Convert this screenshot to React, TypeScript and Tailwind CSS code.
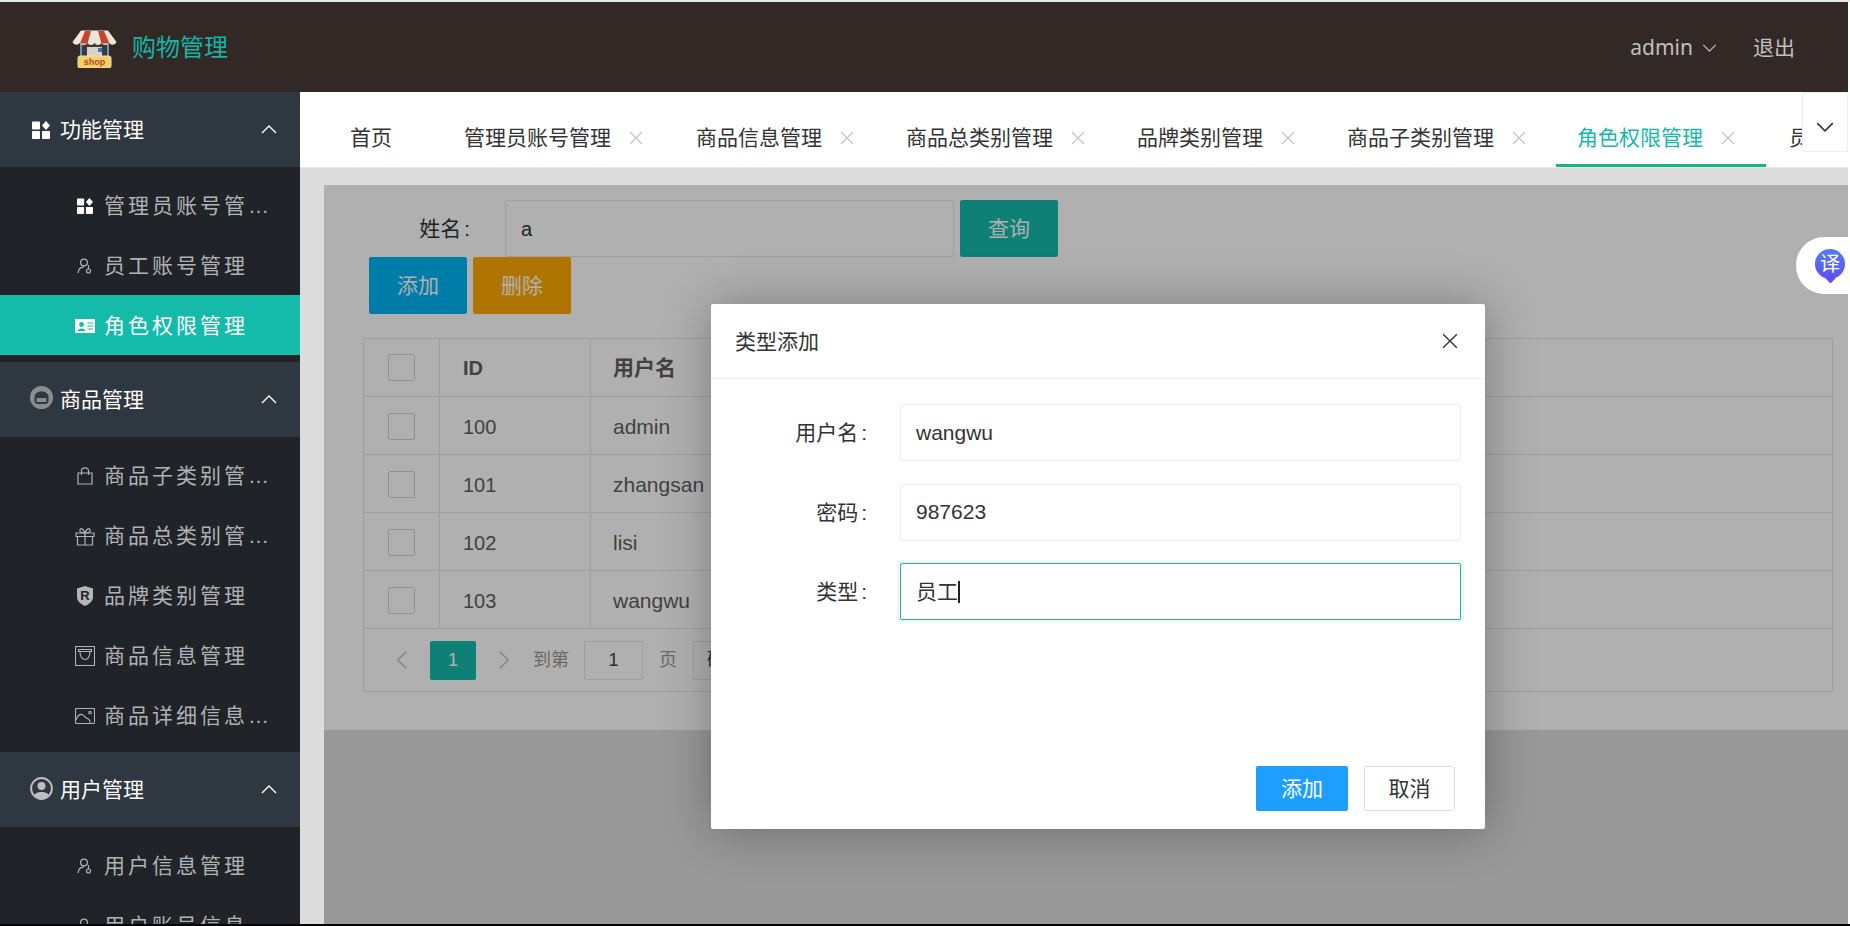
import React from 'react';

const Chevron = ({ up = false, className = '' }: { up?: boolean; className?: string }) => (
    <svg viewBox="0 0 16 9" fill="none" stroke="currentColor" strokeWidth="1.4" className={className}>
        <path d={up ? 'M1 8 L8 1 L15 8' : 'M1 1 L8 8 L15 1'} />
    </svg>
);

const Cross = ({ className = '' }: { className?: string }) => (
    <svg viewBox="0 0 14 14" fill="none" stroke="currentColor" strokeWidth="1.2" className={className}>
        <path d="M1 1 L13 13 M13 1 L1 13" />
    </svg>
);

const GridIcon = ({ className = '' }: { className?: string }) => (
    <svg viewBox="0 0 18 18" fill="currentColor" className={className}>
        <rect x="0" y="0.5" width="8" height="8" rx="0.8" />
        <rect x="0" y="10" width="8" height="8" rx="0.8" />
        <rect x="10" y="10" width="8" height="8" rx="0.8" />
        <path d="M14 0 L18 4.5 L14 9 L10 4.5 Z" />
    </svg>
);

const UserKeyIcon = () => (
    <svg viewBox="0 0 16 16" fill="none" stroke="currentColor" strokeWidth="1.2" className="w-[16px] h-[16px]">
        <circle cx="7" cy="4.5" r="3.4" />
        <path d="M1 15 C1.5 11 3.5 9 7 8.8" />
        <path d="M11.5 7 V11" />
        <circle cx="11.5" cy="13" r="2" />
    </svg>
);

const RoleIcon = () => (
    <svg viewBox="0 0 20 14" className="w-[20px] h-[14px]">
        <rect width="20" height="14" fill="#fff" />
        <circle cx="6.5" cy="5.5" r="2.4" fill="#14bbab" />
        <path d="M2.5 12 C3 8.5 10 8.5 10.5 12 Z" fill="#14bbab" />
        <path d="M12.5 4 H18 M12.5 7 H18 M12.5 10 H18" stroke="#14bbab" strokeWidth="1.2" />
    </svg>
);

const BagIcon = () => (
    <svg viewBox="0 0 16 18" fill="none" stroke="currentColor" strokeWidth="1.2" className="w-[16px] h-[18px]">
        <path d="M1 6 H15 V17 H1 Z" />
        <path d="M4.5 8 V3.8 C4.5 -0.2 11.5 -0.2 11.5 3.8 V8" />
    </svg>
);

const GiftIcon = () => (
    <svg viewBox="0 0 20 19" fill="none" stroke="currentColor" strokeWidth="1.2" className="w-[20px] h-[19px]">
        <path d="M1 6 H19 V9.5 H1 Z" />
        <path d="M2.5 9.5 V18 H17.5 V9.5 M10 6 V18" />
        <path d="M10 6 C6 6 4 4.5 5 2.5 C6.5 0.5 9 2.5 10 6 C11 2.5 13.5 0.5 15 2.5 C16 4.5 14 6 10 6" />
    </svg>
);

const ShieldIcon = () => (
    <svg viewBox="0 0 16 20" className="w-[16px] h-[20px]">
        <path d="M8 0 L16 2.5 V11 C16 15.5 12 18 8 20 C4 18 0 15.5 0 11 V2.5 Z" fill="#b4b5b6" />
        <text x="8" y="14" fontSize="13" fontWeight="700" textAnchor="middle" fill="#202428" fontFamily="Liberation Sans">R</text>
    </svg>
);

const BoxIcon = () => (
    <svg viewBox="0 0 20 20" fill="none" stroke="currentColor" strokeWidth="1.1" className="w-[20px] h-[20px]">
        <rect x="0.5" y="0.5" width="19" height="19" />
        <path d="M3.5 3.5 H16.5 V5.5 H3.5 Z" />
        <path d="M5 6 C5 16 15 16 15 6" />
    </svg>
);

const PictureIcon = () => (
    <svg viewBox="0 0 20 16" fill="none" stroke="currentColor" strokeWidth="1.1" className="w-[20px] h-[16px]">
        <rect x="0.5" y="0.5" width="19" height="15" rx="1" />
        <path d="M1 12 C4 4 8 6 10 9 C12 11 16 11 15 15" />
        <circle cx="15" cy="4.5" r="1.3" />
    </svg>
);

const GoodsCircle = () => (
    <svg viewBox="0 0 23 23" className="w-[23px] h-[23px] -mt-[4px]">
        <circle cx="11.5" cy="11.5" r="11.5" fill="#8b8c8d" />
        <path d="M4.5 11 C4.5 3.5 18.5 3.5 18.5 11 V15 C18.5 17 17 18 15 18 H8 C6 18 4.5 17 4.5 15 Z" fill="#2f3740" />
        <rect x="6.5" y="12" width="10" height="4" rx="1" fill="#8b8c8d" />
    </svg>
);

const UserCircle = () => (
    <svg viewBox="0 0 23 23" className="w-[23px] h-[23px] -mt-[3px]">
        <circle cx="11.5" cy="11.5" r="10.4" fill="#2f3740" stroke="#bdbebf" strokeWidth="2" />
        <circle cx="11.5" cy="9" r="4" fill="#bdbebf" />
        <path d="M4 19 C5 13.5 18 13.5 19 19 C15 22 8 22 4 19 Z" fill="#bdbebf" />
    </svg>
);

const ShopLogo = () => (
    <svg viewBox="0 0 45 38" className="w-[45px] h-[38px] mt-[3px]">
        <path d="M8 13 H37 V27 H8 Z" fill="#3b3a3c" />
        <path d="M9 14 V28 M36 14 V28" stroke="#6d93b5" strokeWidth="2" />
        <rect x="15" y="17" width="15" height="9" fill="#d9d4c8" />
        <rect x="26" y="18" width="4" height="4" fill="#3f78b0" />
        <path d="M9 0.5 H36 L44.5 12 C43 15.5 39 15.5 37.5 13 C36 15.5 31 15.5 29.5 13 C28 15.5 24 15.5 22.5 13 C21 15.5 17 15.5 15.5 13 C14 15.5 9 15.5 7.5 13 C6 15.5 2 15.5 0.5 12 Z" fill="#eee6d8" />
        <path d="M13 1 H19 L15.5 13.5 H8 Z M26 1 H32 L37.5 13.5 H29.5 Z" fill="#c5432f" />
        <rect x="6" y="26" width="33" height="12" rx="2" fill="#f4cf62" stroke="#e8dfc8" />
        <text x="22.5" y="35" fontSize="9" fontWeight="700" textAnchor="middle" fill="#b9452d" fontFamily="Liberation Sans">shop</text>
    </svg>
);

const menus = [
    {
        title: '功能管理',
        icon: <GridIcon className="w-[18px] h-[18px] text-white" />,
        pad: 'pl-[32px] gap-[10px]',
        items: [
            { label: '管理员账号管理', icon: <GridIcon className="w-[16px] h-[16px] text-white" /> },
            { label: '员工账号管理', icon: <UserKeyIcon /> },
            { label: '角色权限管理', icon: <RoleIcon />, active: true }
        ]
    },
    {
        title: '商品管理',
        icon: <GoodsCircle />,
        pad: 'pl-[30px] gap-[7px]',
        items: [
            { label: '商品子类别管理', icon: <BagIcon /> },
            { label: '商品总类别管理', icon: <GiftIcon /> },
            { label: '品牌类别管理', icon: <ShieldIcon /> },
            { label: '商品信息管理', icon: <BoxIcon /> },
            { label: '商品详细信息管理', icon: <PictureIcon /> }
        ]
    },
    {
        title: '用户管理',
        icon: <UserCircle />,
        pad: 'pl-[30px] gap-[7px]',
        items: [
            { label: '用户信息管理', icon: <UserKeyIcon /> },
            { label: '用户账号信息', icon: <UserKeyIcon /> }
        ]
    }
];

const tabs = [
    { label: '首页', cls: 'w-[114px] pl-[23px]' },
    { label: '管理员账号管理', cls: 'w-[232px] pl-[23px]', close: true },
    { label: '商品信息管理', cls: 'w-[210px] pl-[23px]', close: true },
    { label: '商品总类别管理', cls: 'w-[231px] pl-[23px]', close: true },
    { label: '品牌类别管理', cls: 'w-[210px] pl-[23px]', close: true },
    { label: '商品子类别管理', cls: 'w-[232px] pl-[23px]', close: true },
    { label: '角色权限管理', cls: 'w-[210px] pl-[21px] text-[#16b8a8]', close: true, active: true },
    { label: '员工账号管理', cls: 'w-[232px] pl-[23px]', close: true }
];

const users = [
    { id: 100, name: 'admin' },
    { id: 101, name: 'zhangsan' },
    { id: 102, name: 'lisi' },
    { id: 103, name: 'wangwu' }
];

const Sidebar = () => (
    <div className="w-[300px] shrink-0 bg-[#202428] overflow-hidden">
        {menus.map(menu => (
            <div key={menu.title}>
                <div className={`h-[75px] bg-[#2f3740] flex items-center text-white ${menu.pad}`}>
                    {menu.icon}
                    <span className="text-[21px] leading-none">{menu.title}</span>
                    <Chevron up className="w-[16px] h-[9px] ml-auto mr-[23px]" />
                </div>
                <div className="pt-[8px] pb-[7px]">
                    {menu.items.map(item => (
                        <div
                            key={item.label}
                            className={`h-[60px] pl-[75px] pt-[2px] flex items-center ${item.active ? 'bg-[#14bbab] text-white' : 'text-[#b0b2b4]'}`}
                        >
                            <div className="w-[20px] mr-[9px] flex justify-center">{item.icon}</div>
                            <span className="w-[166px] truncate text-[21px] tracking-[3px]">{item.label}</span>
                        </div>
                    ))}
                </div>
            </div>
        ))}
    </div>
);

const TabBar = () => (
    <div className="relative h-[76px] shrink-0 bg-white border-b border-[#e8e8e8] overflow-hidden">
        <div className="flex h-full pl-[27px] w-[1700px] text-[21px] text-[#333]">
            {tabs.map(tab => (
                <div key={tab.label} className={`relative shrink-0 flex items-center pt-[17px] ${tab.cls}`}>
                    <span className="whitespace-nowrap">{tab.label}</span>
                    {tab.close && <Cross className="w-[14px] h-[14px] ml-[18px] text-[#c4c4c4]" />}
                    {tab.active && <div className="absolute left-0 right-0 bottom-0 h-[3px] bg-[#16b777]" />}
                </div>
            ))}
        </div>
        <div className="absolute top-0 right-0 w-[46px] h-[60px] pt-[10px] bg-white border border-[#eee] rounded-[2px] flex items-center justify-center text-[#333]">
            <Chevron className="w-[18px] h-[10px]" />
        </div>
    </div>
);

const UserTable = () => (
    <div className="mt-[24px] ml-[39px] mr-[15px] border border-[#e6e6e6] text-[#5f5f5f] text-[21px]">
        <div className="h-[58px] flex items-center border-b border-[#e6e6e6] font-bold">
            <div className="w-[76px] h-full border-r border-[#e6e6e6] flex items-center justify-center">
                <div className="w-[27px] h-[27px] border border-[#d2d2d2] rounded-[2px]" />
            </div>
            <div className="w-[151px] h-full border-r border-[#e6e6e6] flex items-center pl-[23px] text-[20px]">ID</div>
            <div className="pl-[22px]">用户名</div>
        </div>
        {users.map(user => (
            <div key={user.id} className="h-[58px] flex items-center border-b border-[#e6e6e6]">
                <div className="w-[76px] h-full border-r border-[#e6e6e6] flex items-center justify-center">
                    <div className="w-[27px] h-[27px] mt-[2px] border border-[#d2d2d2] rounded-[2px]" />
                </div>
                <div className="w-[151px] h-full pt-[2px] border-r border-[#e6e6e6] flex items-center pl-[23px] text-[20px]">{user.id}</div>
                <div className="pl-[22px] pt-[2px]">{user.name}</div>
            </div>
        ))}
        <div className="h-[62px] flex items-center pl-[32px] text-[18px] text-[#999]">
            <Chevron up className="w-[12px] h-[20px] -rotate-90 scale-x-[1.6] scale-y-[1.6] text-[#c8c8c8]" />
            <div className="ml-[22px] w-[46px] h-[39px] bg-[#16baaa] rounded-[2px] text-white text-[18px] flex items-center justify-center">1</div>
            <Chevron up className="ml-[22px] w-[12px] h-[20px] rotate-90 scale-x-[1.6] scale-y-[1.6] text-[#c8c8c8]" />
            <span className="ml-[23px]">到第</span>
            <div className="ml-[15px] w-[59px] h-[39px] border border-[#e6e6e6] rounded-[2px] text-[#444] flex items-center justify-center">1</div>
            <span className="ml-[16px]">页</span>
            <div className="ml-[16px] w-[60px] h-[39px] border border-[#e6e6e6] rounded-[2px] text-[#444] flex items-center pl-[13px]">确定</div>
        </div>
    </div>
);

const FormRow = ({ label, children, focus = false, mt = '' }: { label: string; children: React.ReactNode; focus?: boolean; mt?: string }) => (
    <div className={`flex items-center ${mt}`}>
        <div className="w-[156px] text-right text-[#333] text-[21px]">{label}<span className="ml-[3px]">:</span></div>
        <div
            className={`ml-[33px] w-[561px] h-[57px] bg-white rounded-[2px] border pl-[15px] flex items-center text-[21px] text-[#333] ${focus ? 'border-[#2fb380] shadow-[0_0_0_3px_rgba(22,183,119,0.08)]' : 'border-[#eeeeee]'}`}
        >
            {children}
        </div>
    </div>
);

const Dialog = () => (
    <div className="absolute left-[387px] top-[119px] w-[774px] h-[525px] bg-white rounded-[2px] shadow-[1px_1px_50px_rgba(0,0,0,0.3)] flex flex-col">
        <div className="h-[75px] shrink-0 border-b border-[#f0f0f0] flex items-center pl-[24px] pr-[27px] justify-between text-[21px] text-[#333]">
            <span className="mt-[1px]">类型添加</span>
            <Cross className="w-[16px] h-[16px] text-[#333]" />
        </div>
        <div className="pt-[25px]">
            <FormRow label="用户名">wangwu</FormRow>
            <FormRow label="密码" mt="mt-[23px]"><span className="-mt-[2px]">987623</span></FormRow>
            <FormRow label="类型" focus mt="mt-[22px]">
                员工<span className="w-[2px] h-[22px] bg-[#222]" />
            </FormRow>
        </div>
        <div className="mt-auto pb-[18px] pr-[30px] flex justify-end gap-[16px] text-[21px]">
            <div className="w-[92px] h-[45px] pt-[1px] bg-[#1e9fff] text-white rounded-[2px] flex items-center justify-center">添加</div>
            <div className="w-[91px] h-[45px] pt-[1px] bg-white border border-[#dedede] text-[#333] rounded-[2px] flex items-center justify-center">取消</div>
        </div>
    </div>
);

const RolePage = () => (
    <div className="relative flex-1 ml-[24px] bg-[#dcdcdc] overflow-hidden">
        <div className="h-[545px] bg-white pt-[15px]">
            <div className="flex items-center h-[57px]">
                <div className="w-[181px] pr-[35px] text-right text-[#333] text-[21px]">姓名<span className="ml-[3px]">:</span></div>
                <div className="w-[449px] h-[57px] border border-[#e6e6e6] rounded-[2px] pl-[15px] flex items-center text-[20px] text-[#333]">a</div>
                <div className="ml-[6px] w-[98px] h-[57px] bg-[#16baaa] text-white rounded-[2px] flex items-center justify-center text-[21px]">查询</div>
            </div>
            <div className="flex pl-[45px] gap-[6px]">
                <div className="w-[98px] h-[57px] pt-[1px] bg-[#01b4f5] text-white rounded-[2px] flex items-center justify-center text-[21px]">添加</div>
                <div className="w-[98px] h-[57px] pt-[1px] bg-[#ffaa00] text-white rounded-[2px] flex items-center justify-center text-[21px]">删除</div>
            </div>
            <UserTable />
        </div>
        <div className="absolute inset-0 bg-black/[0.31]" />
        <Dialog />
    </div>
);

const App = () => {
    return (
        <div className="relative w-[1850px] h-[926px] overflow-hidden flex flex-col bg-white font-['Liberation_Sans','Noto_Sans_CJK_SC',sans-serif]">
            <div className="h-[2px] shrink-0 bg-[#e8e8e8]" />
            <div className="flex-1 min-h-0 flex flex-col mr-[2px]">
                <div className="h-[90px] shrink-0 bg-[#322826] flex items-center pl-[72px] pr-[53px]">
                    <ShopLogo />
                    <span className="ml-[15px] mt-[2px] text-[24px] text-[#14b5a5]">购物管理</span>
                    <span className="ml-auto mt-[2px] text-[21px] text-[#c2bfbe] font-['Noto_Sans',sans-serif]">admin</span>
                    <Chevron className="ml-[9px] mt-[1px] w-[15px] h-[8px] text-[#c2bfbe]" />
                    <span className="ml-[36px] mt-[2px] text-[21px] text-[#c2bfbe]">退出</span>
                </div>
                <div className="flex-1 min-h-0 flex">
                    <Sidebar />
                    <div className="flex-1 min-w-0 flex flex-col bg-[#dcdcdc]">
                        <TabBar />
                        <div className="h-[17px] shrink-0" />
                        <RolePage />
                    </div>
                </div>
            </div>
            <div className="h-[2px] shrink-0 bg-black" />
            <div className="absolute top-[237px] right-[2px] w-[52px] h-[57px] bg-white rounded-l-[28px] flex items-center justify-end pr-[3px]">
                <div className="relative w-[30px] h-[30px] -mt-[3px] rounded-full bg-gradient-to-b from-[#4f7cf5] to-[#5f4fee] text-white text-[20px] flex items-center justify-center">
                    译
                    <div className="absolute left-[12px] -bottom-[3px] w-[7px] h-[7px] rotate-45 bg-[#5f4fee] -z-0" />
                </div>
            </div>
        </div>
    );
};

export default App;
